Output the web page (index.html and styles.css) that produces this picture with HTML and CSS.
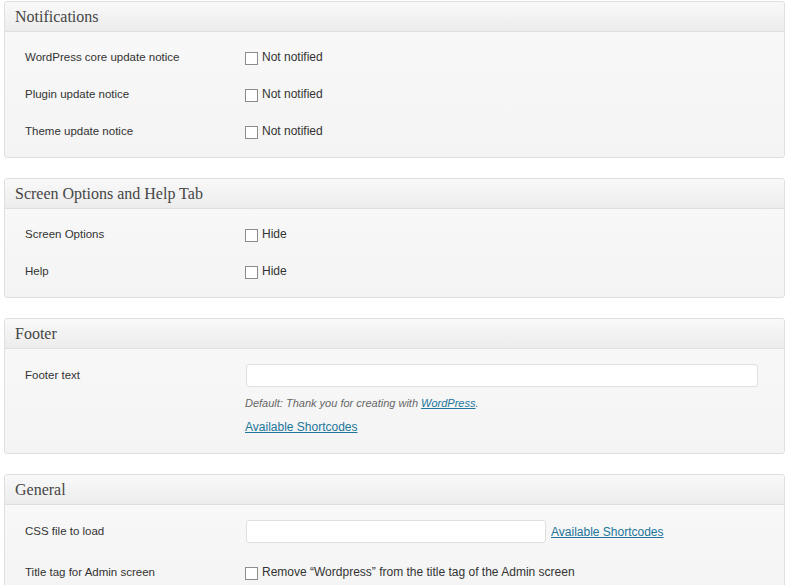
FILE: index.html
```html
<!DOCTYPE html>
<html>
<head>
<meta charset="utf-8">
<link rel="stylesheet" href="styles.css">
</head>
<body>
<div class="wrap">
  <div class="postbox">
    <h3 class="hndle">Notifications</h3>
    <div class="inside">
      <div class="row"><div class="th">WordPress core update notice</div><div class="td"><label class="chk"><input type="checkbox"><span>Not notified</span></label></div></div>
      <div class="row"><div class="th">Plugin update notice</div><div class="td"><label class="chk"><input type="checkbox"><span>Not notified</span></label></div></div>
      <div class="row"><div class="th">Theme update notice</div><div class="td"><label class="chk"><input type="checkbox"><span>Not notified</span></label></div></div>
    </div>
  </div>

  <div class="postbox">
    <h3 class="hndle">Screen Options and Help Tab</h3>
    <div class="inside">
      <div class="row"><div class="th">Screen Options</div><div class="td"><label class="chk"><input type="checkbox"><span>Hide</span></label></div></div>
      <div class="row"><div class="th">Help</div><div class="td"><label class="chk"><input type="checkbox"><span>Hide</span></label></div></div>
    </div>
  </div>

  <div class="postbox">
    <h3 class="hndle">Footer</h3>
    <div class="inside">
      <div class="row input-row">
        <div class="th">Footer text</div>
        <div class="td">
          <input type="text" class="text-wide">
          <p class="description">Default: Thank you for creating with <a href="#">WordPress</a>.</p>
          <p class="shortcodes"><a href="#">Available Shortcodes</a></p>
        </div>
      </div>
    </div>
  </div>

  <div class="postbox">
    <h3 class="hndle">General</h3>
    <div class="inside">
      <div class="row input-row">
        <div class="th">CSS file to load</div>
        <div class="td inline"><input type="text" class="text-mid"><a href="#" class="side-link">Available Shortcodes</a></div>
      </div>
      <div class="row"><div class="th">Title tag for Admin screen</div><div class="td"><label class="chk"><input type="checkbox"><span>Remove “Wordpress” from the title tag of the Admin screen</span></label></div></div>
    </div>
  </div>
</div>
</body>
</html>
```

FILE: styles.css
```css
html, body {
  margin: 0;
  padding: 0;
  background: #fff;
}

body {
  font-family: "Liberation Sans", Arial, sans-serif;
  font-size: 12px;
  color: #333;
}

.wrap {
  padding: 1px 8px 0 4px;
}

.postbox {
  border: 1px solid #dfdfdf;
  border-radius: 3px;
  background: linear-gradient(to bottom, #f9f9f9, #f4f4f4);
  margin-bottom: 20px;
}

.hndle {
  margin: 0;
  height: 29px;
  line-height: 29px;
  padding: 0 10px;
  font-family: Georgia, "Liberation Serif", "Times New Roman", serif;
  font-weight: normal;
  font-size: 16px;
  color: #464646;
  background: linear-gradient(to bottom, #f9f9f9, #ececec);
  border-bottom: 1px solid #dfdfdf;
  border-radius: 3px 3px 0 0;
}

.inside {
  padding: 7px 10px 7px;
}

.row {
  display: grid;
  grid-template-columns: 220px 1fr;
}

.th {
  padding: 10px;
  line-height: 17px;
  font-size: 11.5px;
}

.td {
  padding: 10px;
  line-height: 17px;
}

.input-row .th {
  padding-top: 11px;
}

.input-row .td {
  padding-top: 8px;
  padding-bottom: 8px;
}

.input-row .td.inline {
  padding-bottom: 11px;
}

.chk {
  display: flex;
  align-items: center;
  gap: 4px;
  height: 17px;
}

.chk input {
  appearance: none;
  -webkit-appearance: none;
  width: 13px;
  height: 13px;
  margin: 2px 0 0 0;
  border: 1px solid #8c8c8c;
  background: #fff;
  box-sizing: border-box;
  flex: none;
}

input[type="text"] {
  display: block;
  box-sizing: border-box;
  height: 23px;
  margin: 0 0 0 1px;
  border: 1px solid #dfdfdf;
  border-radius: 3px;
  background: #fff;
}

.text-wide {
  width: 512px;
}

.text-mid {
  width: 300px;
}

.inline {
  display: flex;
  align-items: center;
  gap: 5px;
}

a {
  color: #21759b;
  text-decoration: underline;
}

.description {
  margin: 8px 0 0 0;
  font-style: italic;
  color: #666;
  font-size: 11px;
  line-height: 17px;
}

.shortcodes {
  margin: 7px 0 2px 0;
  line-height: 17px;
}

.side-link {
  margin-top: 1px;
}
```
